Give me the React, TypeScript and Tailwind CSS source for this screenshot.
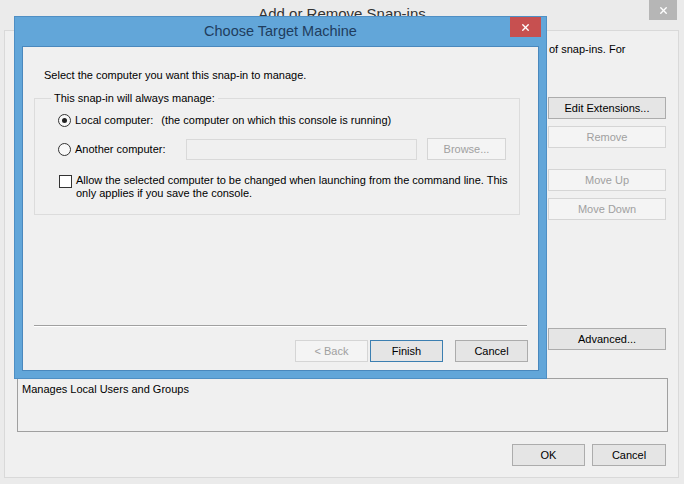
import { X } from "lucide-react";

const font = { fontFamily: '"Liberation Sans", Arial, sans-serif' };

function WinButton({
  label,
  disabled,
  primary,
  className = "",
}: {
  label: string;
  disabled?: boolean;
  primary?: boolean;
  className?: string;
}) {
  const look = disabled
    ? "border-[#d5d5d5] bg-[#f4f4f4] text-[#a0a0a0]"
    : primary
      ? "border-[#3c7fb1] bg-[#e5e5e5] text-black"
      : "border-[#acacac] bg-[#e5e5e5] text-black";
  return (
    <div
      className={`h-[22px] flex items-center justify-center border text-[11px] ${look} ${className}`}
    >
      {label}
    </div>
  );
}

function Radio({ checked }: { checked?: boolean }) {
  return (
    <div className="w-[13px] h-[13px] rounded-full border border-[#333] bg-[#f8f8f8] flex items-center justify-center shrink-0">
      {checked && <div className="w-[5px] h-[5px] rounded-full bg-[#222]" />}
    </div>
  );
}

function ChooseTargetDialog() {
  return (
    <div className="absolute left-[14px] top-[16px] w-[533px] h-[363px] bg-[#62a6d9] border border-[#4f8fc4] flex flex-col">
      {/* title bar */}
      <div className="h-[29px] relative flex items-center justify-center shrink-0">
        <span className="text-[14.5px] text-[#1f3d5e] mt-[1px]">Choose Target Machine</span>
        <div className="absolute right-[5px] top-0 w-[31px] h-[20px] bg-[#c75050] flex items-center justify-center">
          <X className="w-[11px] h-[11px] text-white" strokeWidth={3} />
        </div>
      </div>

      {/* client */}
      <div className="flex-1 mx-[7px] mb-[7px] bg-[#f0f0f0] border border-[#4a88bd] flex flex-col text-black">
        <div className="ml-[21px] mt-[21px] h-[15px] leading-[15px] text-[11px]">
          Select the computer you want this snap-in to manage.
        </div>

        <fieldset className="ml-[11px] mr-[18px] mt-[9px] h-[123px] min-w-0 border border-[#dcdcdc] px-0">
          <legend className="ml-[16px] px-[3px] text-[11px] leading-[13px]">
            This snap-in will always manage:
          </legend>
          <div className="flex items-center ml-[23px] mt-[8px] h-[15px] gap-[4px] text-[11px]">
            <Radio checked />
            <span>Local computer:</span>
            <span className="ml-[4px]">(the computer on which this console is running)</span>
          </div>
          <div className="flex items-center ml-[23px] mt-[10px] h-[22px] text-[11px]">
            <Radio />
            <span className="ml-[4px] w-[111px]">Another computer:</span>
            <div className="w-[231px] h-[21px] border border-[#d9d9d9] bg-[#f0f0f0]" />
            <WinButton label="Browse..." disabled className="ml-[10px] w-[79px]" />
          </div>
          <div className="flex ml-[24px] mt-[14px] text-[11px]">
            <div className="w-[13px] h-[13px] border border-[#333] bg-white shrink-0 mt-[1px]" />
            <div className="ml-[4px] leading-[13px] w-[446px]">
              Allow the selected computer to be changed when launching from the command line. This
              only applies if you save the console.
            </div>
          </div>
        </fieldset>

        <div className="flex-1" />

        <div className="mx-[11px] h-[2px] border-t border-[#a0a0a0] border-b border-b-white" />

        <div className="flex justify-end mr-[10px] mt-[13px] mb-[8px]">
          <WinButton label="< Back" disabled className="w-[73px]" />
          <WinButton label="Finish" primary className="w-[73px] ml-[2px]" />
          <WinButton label="Cancel" className="w-[73px] ml-[12px]" />
        </div>
      </div>
    </div>
  );
}

export default function App() {
  return (
    <div
      className="w-[684px] h-[484px] bg-[#ebebeb] relative overflow-hidden text-black"
      style={font}
    >
      {/* outer window title */}
      <div className="h-[30px] relative flex justify-center">
        <span className="text-[15px] text-[#333] mt-[3px]">Add or Remove Snap-ins</span>
        <div className="absolute right-[7px] top-0 w-[28px] h-[20px] bg-[#b6b6b6] flex items-center justify-center">
          <X className="w-[11px] h-[11px] text-white" strokeWidth={3} />
        </div>
      </div>

      {/* outer client */}
      <div className="ml-[4px] w-[675px] h-[448px] bg-[#f0f0f0] border border-[#d9d9d9] flex flex-col pl-[12px] pr-[10px]">
        <div className="flex h-[335px]">
          <div className="flex-1" />
          <div className="w-[118px] mr-[2px] flex flex-col">
            <div className="mt-[11px] ml-[1px] h-[15px] leading-[15px] text-[11px] whitespace-nowrap">
              of snap-ins. For
            </div>
            <WinButton label="Edit Extensions..." className="mt-[40px]" />
            <WinButton label="Remove" disabled className="mt-[7px]" />
            <WinButton label="Move Up" disabled className="mt-[21px]" />
            <WinButton label="Move Down" disabled className="mt-[7px]" />
            <WinButton label="Advanced..." className="mt-[108px]" />
          </div>
        </div>

        <div className="mt-[12px] h-[54px] border border-[#a0a0a0] bg-[#f0f0f0] px-[4px] pt-[3px] text-[11px] leading-[15px]">
          Manages Local Users and Groups
        </div>

        <div className="flex justify-end mt-[12px] mr-[2px]">
          <WinButton label="OK" className="w-[73px]" />
          <WinButton label="Cancel" className="w-[74px] ml-[7px]" />
        </div>
      </div>

      <ChooseTargetDialog />
    </div>
  );
}
